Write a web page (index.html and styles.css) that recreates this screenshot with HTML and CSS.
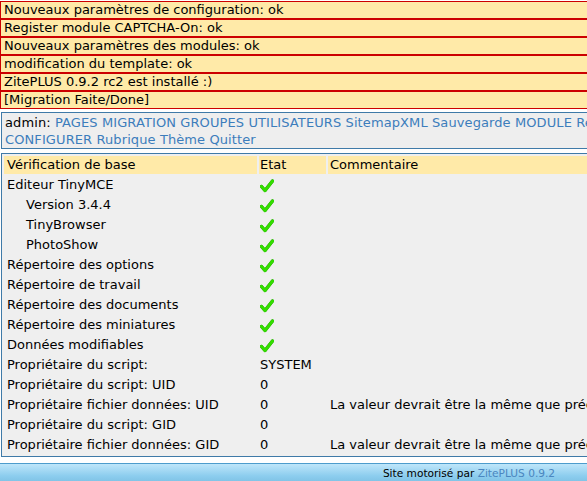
FILE: index.html
```html
<!DOCTYPE html>
<html lang="fr">
<head>
<meta charset="utf-8">
<title>ZitePLUS - Installation</title>
<link rel="stylesheet" href="styles.css">
</head>
<body>
<div class="page">
  <div class="msgs">
    <div class="msg">Nouveaux paramètres de configuration: ok</div>
    <div class="msg">Register module CAPTCHA-On: ok</div>
    <div class="msg">Nouveaux paramètres des modules: ok</div>
    <div class="msg">modification du template: ok</div>
    <div class="msg">ZitePLUS 0.9.2 rc2 est installé :)</div>
    <div class="msg">[Migration Faite/Done]</div>
  </div>

  <div class="admin">admin: <a href="#">PAGES</a> <a href="#">MIGRATION</a> <a href="#">GROUPES</a> <a href="#">UTILISATEURS</a> <a href="#">SitemapXML</a> <a href="#">Sauvegarde</a> <a href="#">MODULE</a> <a href="#">Restauration</a> <a href="#">Référencement</a> <a href="#">STATISTIQUES</a> <a href="#">CONFIGURER</a> <a href="#">Rubrique</a> <a href="#">Thème</a> <a href="#">Quitter</a></div>

  <div class="checks">
    <table class="tbl">
      <colgroup><col class="c1"><col class="c2"><col class="c3"></colgroup>
      <thead>
        <tr><th>Vérification de base</th><th>Etat</th><th>Commentaire</th></tr>
      </thead>
      <tbody>
        <tr><td>Editeur TinyMCE</td><td><svg class="ok" viewBox="0 0 14 14"><path d="M1.5 7.5 L5 11.5 L12.5 2" /></svg></td><td></td></tr>
        <tr><td class="sub">Version 3.4.4</td><td><svg class="ok" viewBox="0 0 14 14"><path d="M1.5 7.5 L5 11.5 L12.5 2" /></svg></td><td></td></tr>
        <tr><td class="sub">TinyBrowser</td><td><svg class="ok" viewBox="0 0 14 14"><path d="M1.5 7.5 L5 11.5 L12.5 2" /></svg></td><td></td></tr>
        <tr><td class="sub">PhotoShow</td><td><svg class="ok" viewBox="0 0 14 14"><path d="M1.5 7.5 L5 11.5 L12.5 2" /></svg></td><td></td></tr>
        <tr><td>Répertoire des options</td><td><svg class="ok" viewBox="0 0 14 14"><path d="M1.5 7.5 L5 11.5 L12.5 2" /></svg></td><td></td></tr>
        <tr><td>Répertoire de travail</td><td><svg class="ok" viewBox="0 0 14 14"><path d="M1.5 7.5 L5 11.5 L12.5 2" /></svg></td><td></td></tr>
        <tr><td>Répertoire des documents</td><td><svg class="ok" viewBox="0 0 14 14"><path d="M1.5 7.5 L5 11.5 L12.5 2" /></svg></td><td></td></tr>
        <tr><td>Répertoire des miniatures</td><td><svg class="ok" viewBox="0 0 14 14"><path d="M1.5 7.5 L5 11.5 L12.5 2" /></svg></td><td></td></tr>
        <tr><td>Données modifiables</td><td><svg class="ok" viewBox="0 0 14 14"><path d="M1.5 7.5 L5 11.5 L12.5 2" /></svg></td><td></td></tr>
        <tr><td>Propriétaire du script:</td><td>SYSTEM</td><td></td></tr>
        <tr><td>Propriétaire du script: UID</td><td>0</td><td></td></tr>
        <tr><td>Propriétaire fichier données: UID</td><td>0</td><td>La valeur devrait être la même que précédemment</td></tr>
        <tr><td>Propriétaire du script: GID</td><td>0</td><td></td></tr>
        <tr><td>Propriétaire fichier données: GID</td><td>0</td><td>La valeur devrait être la même que précédemment</td></tr>
      </tbody>
    </table>
  </div>

  <div class="footer">Site motorisé par <a href="#">ZitePLUS 0.9.2</a></div>
</div>
</body>
</html>
```

FILE: styles.css
```css
html, body {
  margin: 0;
  padding: 0;
  overflow: hidden;
  background: #ffffff;
}
body {
  font-family: "DejaVu Sans", Verdana, sans-serif;
  font-size: 13px;
  color: #000000;
}
.page {
  width: 938px;
  padding-top: 1px;
}
a {
  color: #3c7dbc;
  text-decoration: none;
}
.msg {
  background: #ffeaa8;
  border: 1px solid #cc0000;
  line-height: 16px;
  padding: 0 3px;
}
.admin {
  margin: 3px 0 4px 1px;
  background: #eeeeee;
  border: 1px solid #3f7aa8;
  line-height: 17px;
  padding: 1px 3px 0 3px;
  letter-spacing: 0.1px;
}
.checks {
  margin-left: 1px;
  background: #efefef;
  border: 1px solid #3f7aa8;
}
.tbl {
  width: 100%;
  border-collapse: separate;
  border-spacing: 2px;
  table-layout: fixed;
}
.c1 { width: 253px; }
.c2 { width: 67px; }
.tbl th, .tbl td {
  padding: 1px 2px;
  line-height: 16px;
  text-align: left;
  font-weight: normal;
  white-space: nowrap;
  vertical-align: middle;
}
.tbl th {
  background: #ffeaa8;
}
.tbl td:first-child,
.tbl th:first-child {
  padding-left: 3px;
}
.tbl td.sub {
  padding-left: 22px;
}
.tbl td:nth-child(2),
.tbl th:nth-child(2) {
  padding-left: 1px;
}
.ok {
  display: block;
  width: 14px;
  height: 14px;
  margin-top: 1px;
}
.ok path {
  fill: none;
  stroke: #33dd00;
  stroke-width: 3.2;
  stroke-linecap: round;
  stroke-linejoin: round;
  filter: drop-shadow(0.8px 0.8px 0 #1a6a00);
}
.footer {
  margin-top: 6px;
  height: 20px;
  border-top: 1px solid #4d9ccc;
  background: linear-gradient(#bfe6fa, #8ccdee 60%, #7bbfe3);
  text-align: center;
  font-size: 10.6px;
  line-height: 18px;
  color: #000000;
}
.footer a {
  color: #4a86c0;
}
```
